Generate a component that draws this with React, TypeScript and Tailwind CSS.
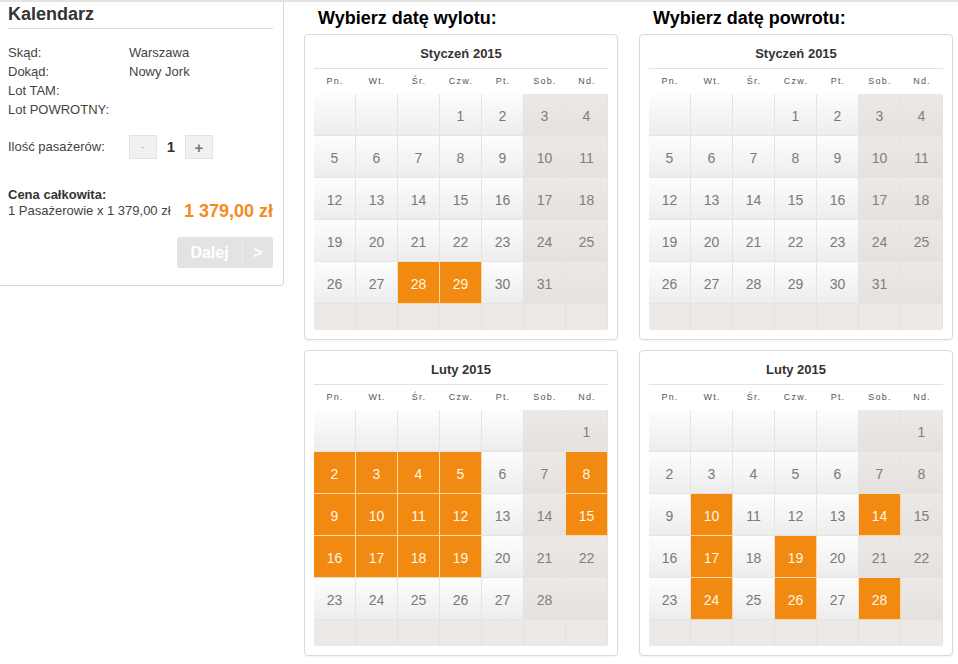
import React from 'react'

type MonthProps = {
    title: string;
    offset: number;
    days: number;
    picked: number[];
}

const WEEKDAYS = ['Pn.', 'Wt.', 'Śr.', 'Czw.', 'Pt.', 'Sob.', 'Nd.'];

const font = "font-['Liberation_Sans',Arial,sans-serif]";

const Month: React.FC<MonthProps> = ({ title, offset, days, picked }) => {
    // always 5 weeks + one empty filler row
    const cells: (number | null)[] = [];
    for (let i = 0; i < 35; i++) {
        const d = i - offset + 1;
        cells.push(d >= 1 && d <= days ? d : null);
    }

    return (
        <div className="w-[314px] rounded-[4px] border border-[#dadada] bg-white px-[9px] pb-[9px] shadow-[0_1px_2px_rgba(0,0,0,0.06)]">
            <div className="h-[34px] border-b border-[#e2e2e2] pt-[9px] text-center text-[13px] font-bold text-[#333]">
                {title}
            </div>
            <div className="grid grid-cols-7 h-[25px] items-center text-center text-[9px] tracking-[1.2px] text-[#555]">
                {WEEKDAYS.map((w) => <span key={w}>{w}</span>)}
            </div>
            <div className="grid grid-cols-7 overflow-hidden rounded-b-[3px] bg-[#e4e1de]">
                {cells.map((d, i) => {
                    const col = i % 7;
                    const weekend = col >= 5;
                    const on = d !== null && picked.includes(d);
                    let cls = 'bg-gradient-to-b from-[#fdfdfd] to-[#ededed] text-[#7a7a7a]';
                    if (weekend) cls = 'bg-gradient-to-b from-[#ece9e7] to-[#e4e1de] text-[#808080]';
                    if (on) cls = 'bg-[#f28a12] text-[#fff6e2] border-[#fbd7a6]';
                    return (
                        <div
                            key={i}
                            className={`h-[42px] flex items-center justify-center pt-[3px] text-[14px] border-r border-b ${on ? '' : 'border-[#e6e3e0]'} ${cls}`}
                        >
                            {d ?? ''}
                        </div>
                    );
                })}
                {Array.from({ length: 7 }).map((_, i) => (
                    <div key={'f' + i} className="h-[26px] border-r border-[#e6e2df] bg-[#ece9e7]" />
                ))}
            </div>
        </div>
    );
}

const Row: React.FC<{ label: string; value?: string }> = ({ label, value }) => (
    <div className="flex h-[19px] items-center">
        <span className="w-[121px]">{label}</span>
        <span>{value}</span>
    </div>
);

export default function App() {
    return (
        <div className={`${font} relative h-[664px] w-[958px] overflow-hidden bg-white text-[#333]`}>
            <div className="h-[2px] w-full bg-[#e3e3e3]" />
            <div className="flex">
                {/* booking summary */}
                <div className="h-[284px] w-[284px] shrink-0 rounded-br-[4px] border-r border-b border-[#d6d6d6] pl-2 pr-[10px]">
                    <div className="h-[27px] border-b border-[#d9d9d9] pt-[2px] text-[18px] font-bold leading-[20px] text-[#333]">
                        Kalendarz
                    </div>
                    <div className="mt-[14px] text-[13px] text-[#444]">
                        <Row label="Skąd:" value="Warszawa" />
                        <Row label="Dokąd:" value="Nowy Jork" />
                        <Row label="Lot TAM:" />
                        <Row label="Lot POWROTNY:" />
                    </div>
                    <div className="mt-[16px] flex items-center text-[13px] text-[#444]">
                        <span className="w-[121px]">Ilość pasażerów:</span>
                        <button className="h-[24px] w-[28px] border border-[#e2e2e2] bg-[#f1f1f1] text-[12px] text-[#c4c4c4]">-</button>
                        <span className="w-[28px] text-center text-[15px] font-bold text-[#333]">1</span>
                        <button className="h-[24px] w-[28px] border border-[#e2e2e2] bg-[#f1f1f1] text-[15px] font-bold leading-none text-[#777]">+</button>
                    </div>
                    <div className="mt-[28px] text-[13px] font-bold leading-[16px] text-[#333]">Cena całkowita:</div>
                    <div className="flex h-[16px] items-center justify-between text-[13px] text-[#444]">
                        <span>1 Pasażerowie x 1 379,00 zł</span>
                        <span className="text-[18px] font-bold text-[#f28c1a]">1 379,00 zł</span>
                    </div>
                    <div className="mt-[18px] flex justify-end">
                        <div className="flex h-[31px] w-[96px] items-center rounded-[3px] bg-[#e3e3e3] text-[16px] font-bold text-white">
                            <span className="w-[66px] border-r border-[#ececec] text-center leading-[31px]">Dalej</span>
                            <span className="flex-1 text-center">&gt;</span>
                        </div>
                    </div>
                </div>

                {/* date pickers */}
                <div className="ml-[20px] flex gap-[21px]">
                    <div className="flex flex-col">
                        <h2 className="flex h-[32px] items-center pl-[14px] pt-[1px] text-[18px] font-bold text-black">Wybierz datę wylotu:</h2>
                        <Month title="Styczeń 2015" offset={3} days={31} picked={[28, 29]} />
                        <div className="h-[10px]" />
                        <Month title="Luty 2015" offset={6} days={28} picked={[2, 3, 4, 5, 8, 9, 10, 11, 12, 15, 16, 17, 18, 19]} />
                    </div>
                    <div className="flex flex-col">
                        <h2 className="flex h-[32px] items-center pl-[14px] pt-[1px] text-[18px] font-bold text-black">Wybierz datę powrotu:</h2>
                        <Month title="Styczeń 2015" offset={3} days={31} picked={[]} />
                        <div className="h-[10px]" />
                        <Month title="Luty 2015" offset={6} days={28} picked={[10, 14, 17, 19, 24, 26, 28]} />
                    </div>
                </div>
            </div>
        </div>
    )
}
